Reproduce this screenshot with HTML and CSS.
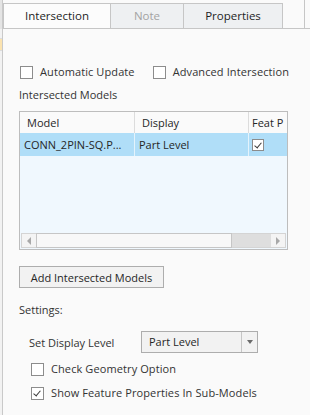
FILE: index.html
```html
<!DOCTYPE html>
<html lang="en">
  <head>
    <meta charset="UTF-8" />
    <title>Intersection</title>
    <link rel="stylesheet" href="styles.css">
  </head>
  <body>
    <div class="window">
      <div class="side">
        <div class="side-top"></div>
        <div class="side-cell"></div>
        <div class="side-cell picked"></div>
      </div>
      <div class="panel">
        <div class="tabs">
          <div class="tab active">Intersection</div>
          <div class="tab disabled">Note</div>
          <div class="tab">Properties</div>
          <div class="tab-rest"></div>
        </div>

        <div class="content">
          <div class="check-row">
            <label class="check"><span class="box"></span>Automatic Update</label>
            <label class="check"><span class="box"></span>Advanced Intersection</label>
          </div>

          <div class="caption">Intersected Models</div>

          <div class="grid">
            <div class="grid-row head">
              <div class="cell">Model</div>
              <div class="cell">Display</div>
              <div class="cell last">Feat P</div>
            </div>
            <div class="grid-row selected">
              <div class="cell">CONN_2PIN-SQ.P...</div>
              <div class="cell">Part Level</div>
              <div class="cell last"><span class="box checked small"></span></div>
            </div>
            <div class="grid-fill"></div>
            <div class="hscroll">
              <div class="sb-btn"><span class="arrow left"></span></div>
              <div class="sb-thumb"></div>
              <div class="sb-track"></div>
              <div class="sb-btn"><span class="arrow right"></span></div>
            </div>
          </div>

          <button class="btn">Add Intersected Models</button>

          <div class="caption settings">Settings:</div>

          <div class="setting-row">
            <span class="setting-label">Set Display Level</span>
            <div class="select">
              <span class="select-value">Part Level</span>
              <span class="select-btn"><span class="arrow down"></span></span>
            </div>
          </div>

          <label class="check indent"><span class="box"></span>Check Geometry Option</label>
          <label class="check indent"><span class="box checked"></span>Show Feature Properties In Sub-Models</label>
        </div>
      </div>
    </div>
  </body>
</html>
```

FILE: styles.css
```css
body {
  margin: 0;
  background: #fafafa;
  font-family: 'Open Sans', 'Noto Sans', sans-serif;
  font-size: 11px;
  color: #262626;
}

.window {
  display: flex;
  width: 310px;
  height: 415px;
  overflow: hidden;
}

/* strip of the neighbouring tree on the left */
.side {
  width: 2px;
  border-right: 1px solid #c9c9c9;
  background: #f2f2f2;
  display: flex;
  flex-direction: column;
}

.side-top {
  height: 29px;
  background: #e4e4e4;
}

.side-cell {
  height: 9px;
  border-bottom: 1px solid #dcdcdc;
}

.side-cell.picked {
  height: 11px;
  background: #fbe3b0;
}

.panel {
  flex: 1;
  display: flex;
  flex-direction: column;
}

.tabs {
  display: flex;
  align-items: flex-end;
  height: 28px;
  border-bottom: 1px solid #c6c6c6;
}

.tab {
  height: 24px;
  line-height: 23px;
  text-align: center;
  border: 1px solid #c6c6c6;
  border-bottom: none;
  margin-left: -1px;
  background: #eef0f2;
  color: #1e1e1e;
  font-size: 11.5px;
}

.tab:first-child {
  margin-left: 0;
}

.tab.active {
  width: 106px;
  background: #fcfcfc;
}

.tab.disabled {
  width: 72px;
  color: #a3a3a3;
}

.tab:nth-child(3) {
  width: 98px;
}

.tab-rest {
  width: 21px;
  height: 28px;
  border-right: 1px solid #c6c6c6;
}

.content {
  display: flex;
  flex-direction: column;
  align-items: flex-start;
  padding-left: 16px;
}

.check-row {
  display: flex;
  gap: 18px;
  margin-top: 35px;
  padding-left: 1px;
}

.check {
  display: flex;
  align-items: center;
  height: 16px;
  line-height: 16px;
  color: #333;
  white-space: nowrap;
  letter-spacing: 0.1px;
}

.box {
  box-sizing: border-box;
  width: 13px;
  height: 13px;
  border: 1px solid #8c8c8c;
  background: #fff;
  margin-right: 7px;
  position: relative;
}

.box.checked::after {
  content: '';
  position: absolute;
  left: 3px;
  top: 1px;
  width: 3px;
  height: 6px;
  border: solid #3a3a3a;
  border-width: 0 1.5px 1.5px 0;
  transform: rotate(40deg);
}

.box.small {
  width: 12px;
  height: 12px;
  margin: 0;
}

.caption {
  margin-top: 7px;
  height: 16px;
  line-height: 16px;
  color: #333;
}

.grid {
  box-sizing: border-box;
  width: 269px;
  height: 139px;
  margin-top: 8px;
  border: 1px solid #bdbdbd;
  background: #f0f8fe;
  display: flex;
  flex-direction: column;
}

.grid-row {
  display: grid;
  grid-template-columns: 115px 114px 1fr;
  overflow: hidden;
}

.grid-row.head {
  height: 21px;
  background: #fafafa;
}

.grid-row.selected {
  height: 23px;
  background: #b0def8;
}

.cell {
  display: flex;
  align-items: center;
  padding-left: 4px;
  border-right: 1px solid #dcdcdc;
  white-space: nowrap;
  overflow: hidden;
}

.head .cell {
  padding-left: 7px;
  line-height: 16px;
}

.selected .cell {
  border-right-color: #e4f3fc;
}

.cell.last {
  border-right: none;
  padding-left: 3px;
}

.grid-fill {
  flex: 1;
}

.hscroll {
  display: flex;
  height: 15px;
  margin: 0 1px 1px;
  border: 1px solid #d4d4d4;
  box-sizing: border-box;
  background: #f4f4f4;
}

.sb-btn {
  width: 14px;
  display: flex;
  align-items: center;
  justify-content: center;
}

.sb-thumb {
  width: 196px;
  box-sizing: border-box;
  border: 1px solid #c6c6c6;
  background: #f8f8f8;
  margin: -1px 0;
}

.sb-track {
  flex: 1;
  background: #dedede;
}

.arrow {
  width: 0;
  height: 0;
  border: 4px solid transparent;
}

.arrow.left {
  border-right: 4px solid #a8a8a8;
  border-left-width: 0;
}

.arrow.right {
  border-left: 4px solid #a8a8a8;
  border-right-width: 0;
}

.arrow.down {
  border-width: 4px 3px 0;
  border-top-color: #6a6a6a;
}

.btn {
  margin-top: 16px;
  height: 22px;
  width: 145px;
  padding: 0;
  background: #f2f2f2;
  border: 1px solid #adadad;
  font-family: inherit;
  font-size: 11px;
  color: #262626;
}

.caption.settings {
  margin-top: 14px;
}

.setting-row {
  display: flex;
  align-items: center;
  margin-top: 13px;
  padding-left: 10px;
}

.setting-label {
  width: 112px;
  color: #333;
}

.select {
  display: flex;
  box-sizing: border-box;
  width: 117px;
  height: 22px;
  border: 1px solid #adadad;
  background: #f2f2f2;
}

.select-value {
  flex: 1;
  padding-left: 7px;
  line-height: 20px;
}

.select-btn {
  width: 15px;
  border-left: 1px solid #c6c6c6;
  display: flex;
  align-items: center;
  justify-content: center;
}

.check.indent {
  margin-top: 8px;
  padding-left: 12px;
}
```
